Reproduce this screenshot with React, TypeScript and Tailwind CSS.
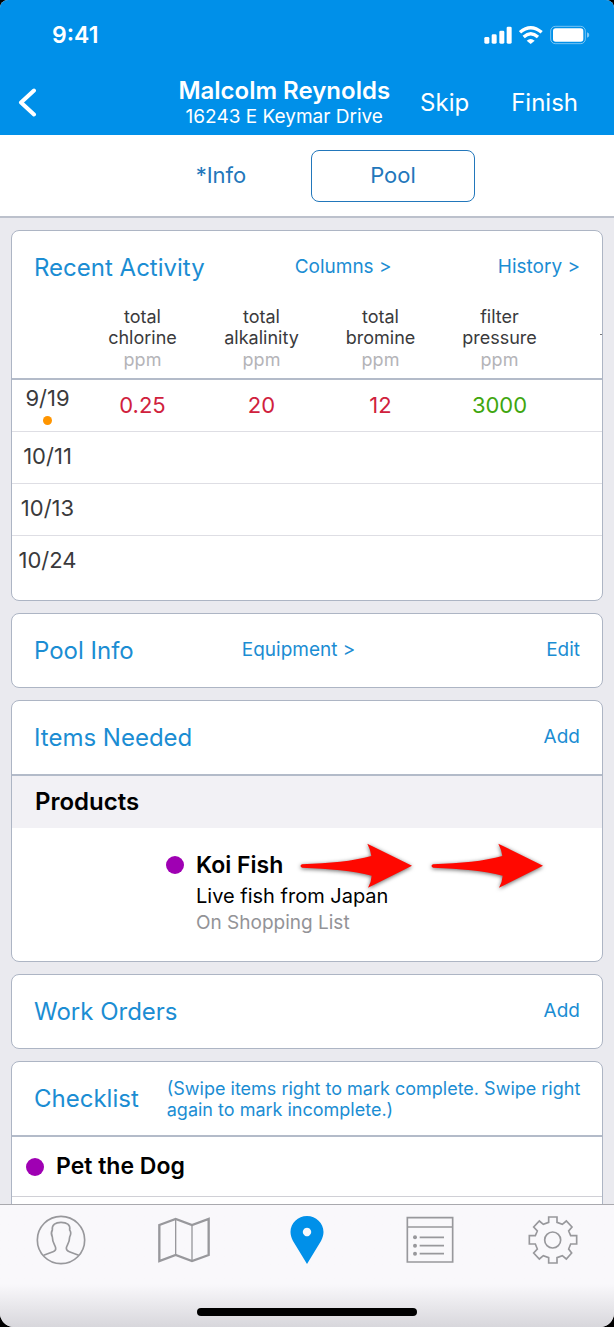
import React from "react";

interface CardProps {
  children: React.ReactNode;
}

interface CardHeaderProps {
  title: string;
  children?: React.ReactNode;
}

interface Reading {
  value: string;
  ok: boolean;
}

interface ActivityRow {
  date: string;
  flagged?: boolean;
  readings: Reading[];
}

const columns = [
  { line1: "total", line2: "chlorine", unit: "ppm" },
  { line1: "total", line2: "alkalinity", unit: "ppm" },
  { line1: "total", line2: "bromine", unit: "ppm" },
  { line1: "filter", line2: "pressure", unit: "ppm" },
];

const rows: ActivityRow[] = [
  {
    date: "9/19",
    flagged: true,
    readings: [
      { value: "0.25", ok: false },
      { value: "20", ok: false },
      { value: "12", ok: false },
      { value: "3000", ok: true },
    ],
  },
  { date: "10/11", readings: [] },
  { date: "10/13", readings: [] },
  { date: "10/24", readings: [] },
];

const StatusBar: React.FC = () => (
  <div className="flex h-[70px] items-center justify-between pl-[52px] pr-6">
    <span className="text-[23px] font-semibold">9:41</span>
    <div className="flex items-center gap-[7px]">
      <svg className="h-5 w-7" viewBox="542 74 84 60" fill="currentColor">
        <rect x="543" y="110" width="15" height="20" rx="4" />
        <rect x="565" y="102" width="15" height="28" rx="4" />
        <rect x="588" y="91" width="15" height="39" rx="4" />
        <rect x="610" y="79" width="15" height="51" rx="4" />
      </svg>
      <svg
        className="h-5 w-6"
        viewBox="647 74 72 60"
        fill="none"
        stroke="currentColor"
        strokeWidth="10"
      >
        <path d="M650 96 Q682 68 715 96" />
        <path d="M661 110 Q682 91 704 110" />
        <path d="M670 121 Q682 111 694 121 L682 131Z" fill="currentColor" stroke="none" />
      </svg>
      <svg className="h-5 w-10" viewBox="738 74 120 60">
        <rect
          x="740"
          y="78"
          width="104"
          height="52"
          rx="14"
          fill="none"
          stroke="#fff"
          strokeOpacity="0.45"
          strokeWidth="3"
        />
        <rect x="747" y="84" width="91" height="40" rx="8" fill="#fff" />
        <path d="M849 96 q7 2 7 8 q0 6 -7 8Z" fill="#fff" fillOpacity="0.5" />
      </svg>
    </div>
  </div>
);

const Card: React.FC<CardProps> = ({ children }) => (
  <section className="shrink-0 overflow-hidden rounded-lg border border-[#adb5c4] bg-white">
    {children}
  </section>
);

const CardHeader: React.FC<CardHeaderProps> = ({ title, children }) => (
  <div className="flex h-[73px] items-center px-[22px] text-[#1b8dd3]">
    <h2 className="text-2xl">{title}</h2>
    {children}
  </div>
);

const ActivityTable: React.FC = () => (
  <table className="mb-[13px] w-full table-fixed border-collapse text-center text-[#3a3a3c]">
    <thead>
      <tr className="border-b-2 border-[#b3bbc9]">
        <th className="w-[71px]" />
        {columns.map((column) => (
          <th
            key={column.line2}
            className="w-[119px] pt-0.5 pb-[6px] text-lg leading-[21px] font-normal"
          >
            <div>{column.line1}</div>
            <div>{column.line2}</div>
            <div className="leading-6 text-[#b4b4b8]">{column.unit}</div>
          </th>
        ))}
        <th className="p-0 pb-3.5">
          <div className="ml-auto h-px w-0.5 bg-[#77777b]" />
        </th>
      </tr>
    </thead>
    <tbody>
      {rows.map((row) => (
        <tr
          key={row.date}
          className="h-[52px] border-b border-[#dedee4] last:border-b-0"
        >
          <td className="p-0 pb-0.5 text-[22px]">
            <div className="leading-7">{row.date}</div>
            {row.flagged && (
              <div className="mx-auto mt-1 size-[9px] rounded-full bg-[#ff9500]" />
            )}
          </td>
          {columns.map((column, i) => (
            <td
              key={column.line2}
              className={`p-0 text-[22px] ${
                row.readings[i]?.ok ? "text-[#3fa60f]" : "text-[#d0213d]"
              }`}
            >
              {row.readings[i]?.value}
            </td>
          ))}
          <td />
        </tr>
      ))}
    </tbody>
  </table>
);

const SwipeArrow: React.FC = () => (
  <svg
    className="h-[50px] w-[115px] drop-shadow-sm drop-shadow-black/60"
    viewBox="28 455 345 150"
    fill="#ff0800"
  >
    <path d="M37 525 C120 521 190 516 245 500 Q242 480 233 463 L367 529 L235 595 Q245 578 246 559 C190 543 120 539 37 535 Q28 530 37 525Z" />
  </svg>
);

const PersonIcon: React.FC = () => (
  <svg
    className="size-[50px]"
    viewBox="107 76 150 150"
    fill="none"
    stroke="currentColor"
    strokeWidth="5"
  >
    <circle cx="182" cy="151" r="71" />
    <path d="M130 197 L158 186 Q167 183 166 176 C166 168 156 160 156 142 C152 134 153 126 156 121 C154 104 166 98 182 98 C199 98 211 104 208 121 C212 126 212 134 208 142 C208 160 198 168 198 176 Q198 183 207 186 L235 197" />
  </svg>
);

const MapIcon: React.FC = () => (
  <svg
    className="h-[50px] w-[54px]"
    viewBox="472 76 162 150"
    fill="none"
    stroke="currentColor"
  >
    <path
      d="M479 106 L528 88 L577 106 L627 88 V196 L577 214 L528 196 L479 214Z"
      strokeWidth="7"
    />
    <path d="M528 88 V196 M577 106 V214" strokeWidth="4" />
  </svg>
);

const PinIcon: React.FC = () => (
  <svg className="h-[50px] w-[34px]" viewBox="0 0 34 50" fill="#0090e9">
    <path
      fillRule="evenodd"
      d="M17 1 C26 1 33.500 8 33.500 17 C33.500 20 32.500 23 31 26 L17 49 L3 26 C1.500 23 0.500 20 0.500 17 C0.500 8 8 1 17 1Z M17 12.800 a4.200 4.200 0 1 0 0.010 0Z"
    />
  </svg>
);

const ListIcon: React.FC = () => (
  <svg
    className="h-[50px] w-12"
    viewBox="307 76 144 150"
    fill="none"
    stroke="currentColor"
    strokeWidth="5"
  >
    <path d="M311 84 H447 V217 H311Z M311 112 H447 M348 143 H421 M348 168 H421 M348 192 H421" />
    <g fill="currentColor" stroke="none">
      <circle cx="334" cy="143" r="6" />
      <circle cx="334" cy="168" r="6" />
      <circle cx="334" cy="192" r="6" />
    </g>
  </svg>
);

const GearIcon: React.FC = () => (
  <svg
    className="size-[50px]"
    viewBox="675 76 150 150"
    fill="none"
    stroke="currentColor"
    strokeWidth="5"
  >
    <path d="M737 82 H762 V98 L778 104 L790 94 L807 112 L797 124 L803 138 H821 V163 H803 L797 178 L806 190 L790 208 L778 198 L762 204 V220 H737 V204 L721 198 L709 208 L692 190 L703 178 L697 163 H679 V138 H697 L703 124 L692 112 L709 94 L721 104 L737 98Z" />
    <circle cx="749" cy="151" r="24" />
  </svg>
);

const tabs = [
  { label: "Profile", Icon: PersonIcon },
  { label: "Map", Icon: MapIcon },
  { label: "Location", Icon: PinIcon },
  { label: "List", Icon: ListIcon },
  { label: "Settings", Icon: GearIcon },
];

export default function App() {
  return (
    <div className="bg-black font-[Inter,sans-serif]">
      <div className="flex h-screen flex-col overflow-hidden rounded-t-lg rounded-b-[14px] bg-[#eaeaef]">
        <header className="shrink-0 bg-[#0090e9] text-white">
          <StatusBar />
          <div className="flex h-[65px] items-center pl-[18px] pr-9">
            <button type="button" aria-label="Back">
              <svg
                className="h-[30px] w-5"
                viewBox="0 0 20 30"
                fill="none"
                stroke="currentColor"
                strokeWidth="4"
                strokeLinecap="round"
                strokeLinejoin="round"
              >
                <path d="M16 2.500 L3 14.500 L16 26.500" />
              </svg>
            </button>
            <div className="ml-auto text-center">
              <h1 className="text-2xl leading-7 font-semibold">
                Malcolm Reynolds
              </h1>
              <p className="text-[19px] leading-6">16243 E Keymar Drive</p>
            </div>
            <button type="button" className="ml-[30px] text-2xl">
              Skip
            </button>
            <button type="button" className="ml-[42px] text-2xl">
              Finish
            </button>
          </div>
        </header>

        <div className="flex h-[83px] shrink-0 items-center justify-center gap-2 border-b-2 border-[#bcc1cc] bg-white text-[22px] text-[#2277bb]">
          <button type="button" className="h-[52px] w-[164px]">
            *Info
          </button>
          <button
            type="button"
            className="h-[52px] w-[164px] rounded-lg border border-[#2277bb]"
          >
            Pool
          </button>
        </div>

        <main className="flex min-h-0 flex-1 flex-col gap-3 overflow-hidden px-[11px] pt-3">
          <Card>
            <CardHeader title="Recent Activity">
              <a href="#columns" className="ml-[90px] text-[19px]">
                Columns &gt;
              </a>
              <a href="#history" className="ml-auto text-[19px]">
                History &gt;
              </a>
            </CardHeader>
            <ActivityTable />
          </Card>

          <Card>
            <CardHeader title="Pool Info">
              <a href="#equipment" className="ml-[108px] text-[19px]">
                Equipment &gt;
              </a>
              <a href="#edit" className="ml-auto text-[19px]">
                Edit
              </a>
            </CardHeader>
          </Card>

          <Card>
            <CardHeader title="Items Needed">
              <a href="#add-item" className="ml-auto text-[19px]">
                Add
              </a>
            </CardHeader>
            <h3 className="border-t-2 border-[#b3bbc9] bg-[#f2f1f5] px-[23px] text-2xl leading-[52px] font-semibold text-black">
              Products
            </h3>
            <div className="relative flex h-[133px] gap-3 pt-[21px] pl-[154px]">
              <span className="mt-[7px] size-[18px] shrink-0 rounded-full bg-[#9f00b3]" />
              <div>
                <p className="text-[23px] leading-8 font-semibold text-black">
                  Koi Fish
                </p>
                <p className="text-xl leading-[30px] text-black">
                  Live fish from Japan
                </p>
                <p className="text-[19px] leading-6 text-[#939397]">
                  On Shopping List
                </p>
              </div>
              <div className="absolute top-[13px] left-[287px] flex gap-4">
                <SwipeArrow />
                <SwipeArrow />
              </div>
            </div>
          </Card>

          <Card>
            <CardHeader title="Work Orders">
              <a href="#add-order" className="ml-auto text-[19px]">
                Add
              </a>
            </CardHeader>
          </Card>

          <Card>
            <CardHeader title="Checklist">
              <p className="-mr-3 ml-7 text-lg leading-[21px]">
                (Swipe items right to mark complete. Swipe right again to mark
                incomplete.)
              </p>
            </CardHeader>
            <ul className="border-t-2 border-[#b3bbc9] text-[23px] font-semibold text-black">
              <li className="flex h-[60px] items-center gap-3 border-b border-[#d0d0d6] px-[14px]">
                <span className="size-[18px] rounded-full bg-[#9f00b3]" />
                Pet the Dog
              </li>
              <li className="h-[60px]" />
            </ul>
          </Card>
        </main>

        <nav className="h-[123px] shrink-0 border-t border-[#a9a9ae] bg-linear-to-b from-[#f9f8fb] from-65% to-[#d8d7dc] text-[#98989c]">
          <div className="grid grid-cols-5 pt-[10px]">
            {tabs.map(({ label, Icon }) => (
              <button
                key={label}
                type="button"
                aria-label={label}
                className="flex justify-center"
              >
                <Icon />
              </button>
            ))}
          </div>
          <div className="mx-auto mt-[43px] h-2 w-[220px] rounded-full bg-black" />
        </nav>
      </div>
    </div>
  );
}
